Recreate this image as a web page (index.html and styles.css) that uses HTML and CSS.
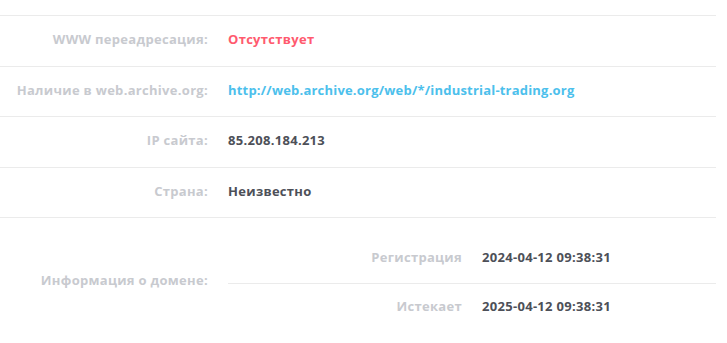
FILE: index.html
```html
<!DOCTYPE html>
<html lang="ru">
<head>
<meta charset="utf-8">
<link rel="stylesheet" href="styles.css">
</head>
<body>
<div class="info">
  <div class="row">
    <div class="label">WWW переадресация:</div>
    <div class="value red">Отсутствует</div>
  </div>
  <div class="row">
    <div class="label">Наличие в web.archive.org:</div>
    <div class="value blue">http://web.archive.org/web/*/industrial-trading.org</div>
  </div>
  <div class="row">
    <div class="label">IP сайта:</div>
    <div class="value">85.208.184.213</div>
  </div>
  <div class="row">
    <div class="label">Страна:</div>
    <div class="value">Неизвестно</div>
  </div>
  <div class="row row-domain">
    <div class="label">Информация о домене:</div>
    <div class="sub">
      <div class="subrow">
        <div class="sublabel">Регистрация</div>
        <div class="subvalue">2024-04-12 09:38:31</div>
      </div>
      <div class="subrow">
        <div class="sublabel">Истекает</div>
        <div class="subvalue">2025-04-12 09:38:31</div>
      </div>
    </div>
  </div>
</div>
</body>
</html>
```
FILE: styles.css
```css
html, body {
  margin: 0;
  padding: 0;
  background: #ffffff;
}
body {
  font-family: "Open Sans", "Liberation Sans", sans-serif;
  font-weight: 700;
  font-size: 13px;
  letter-spacing: 0.3px;
  line-height: 16px;
}
.info {
  width: 716px;
  padding-top: 15px;
}
.row {
  box-sizing: border-box;
  display: grid;
  grid-template-columns: 218px 1fr;
  border-top: 1px solid #ebebeb;
  height: 50.5px;
  align-items: center;
}
.row-domain {
  height: auto;
}
.label {
  text-align: right;
  padding-right: 10px;
  padding-bottom: 3px;
  color: #c8cacf;
  white-space: nowrap;
}
.value {
  padding-left: 10px;
  padding-bottom: 3px;
  color: #4d5058;
  white-space: nowrap;
}
.red { color: #ff5a6e; }
.blue {
  color: #4cc0ec;
  letter-spacing: 0.2px;
}
.sub {
  margin-left: 10px;
  padding: 15px 0 13px;
}
.subrow {
  box-sizing: border-box;
  display: grid;
  grid-template-columns: 1fr 1fr;
  height: 50px;
  align-items: center;
}
.subrow + .subrow {
  border-top: 1px solid #ebebeb;
  height: 48px;
}
.sublabel {
  text-align: right;
  padding-right: 10px;
  padding-bottom: 3px;
  color: #c8cacf;
}
.subvalue {
  padding-left: 10px;
  padding-bottom: 3px;
  color: #4d5058;
  white-space: nowrap;
}
```
